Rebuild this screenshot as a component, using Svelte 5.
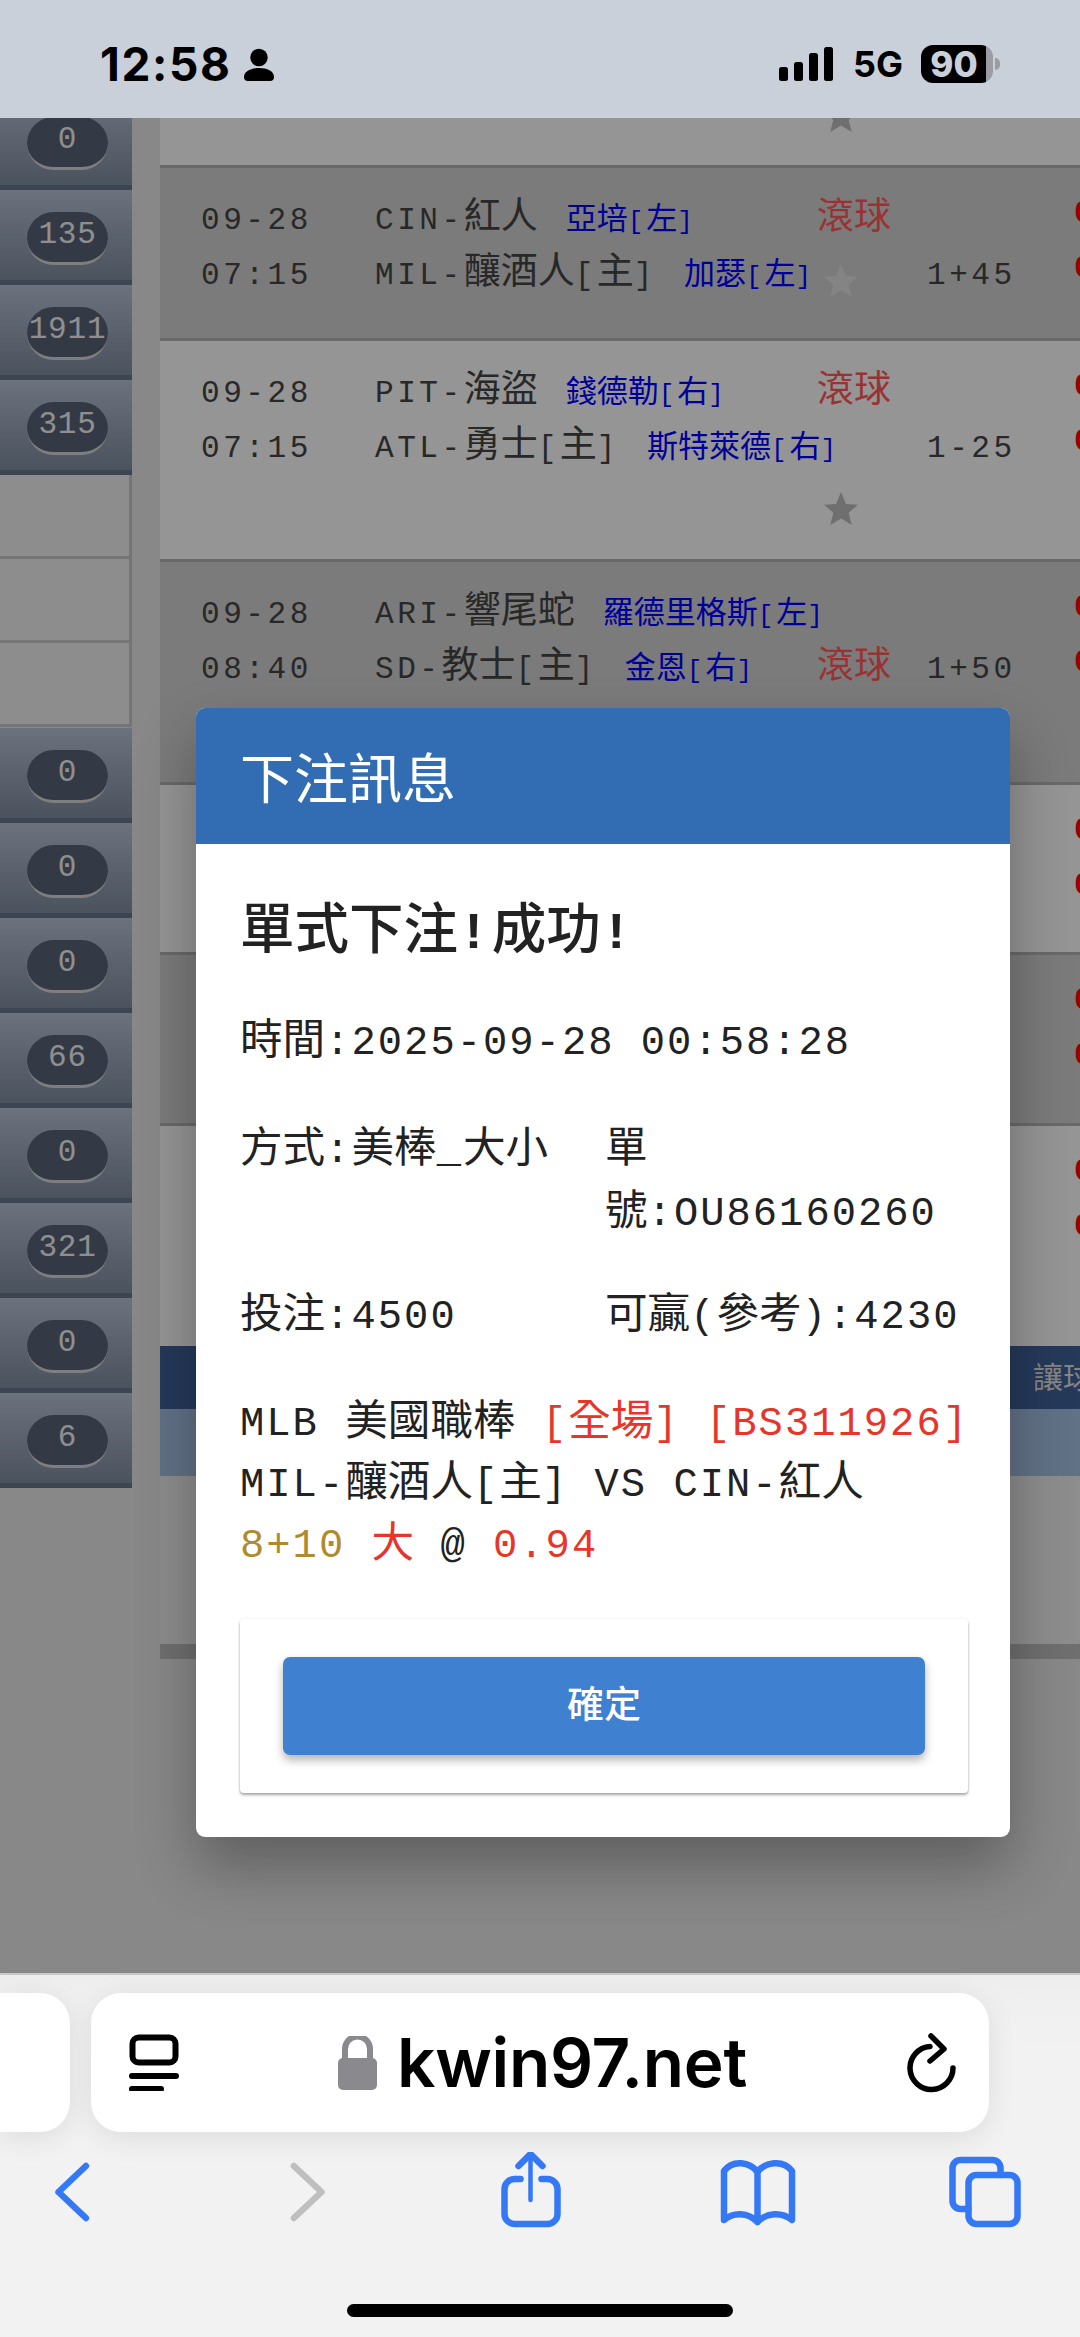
<script>
  const split = (s) => s.match(/[\u2E80-\uFFFF]+|[^\u2E80-\uFFFF]+/g) ?? [];
  const isCjk = (s) => /[\u2E80-\uFFFF]/.test(s);

  const topRows = ['0', '135', '1911', '315'];
  const bottomRows = ['0', '0', '0', '66', '0', '321', '0', '6'];

  const rows = [
    { h: 165, date: '', time: '', a: '', b: '', sa: '', sb: '', starRow: 2 },
    { h: 173, dark: true, date: '09-28', time: '07:15', a: 'CIN-紅人', sa: '亞培[左]', b: 'MIL-釀酒人[主]', sb: '加瑟[左]', live: 1, starRow: 2, odds: '1+45' },
    { h: 221, date: '09-28', time: '07:15', a: 'PIT-海盜', sa: '錢德勒[右]', b: 'ATL-勇士[主]', sb: '斯特萊德[右]', live: 1, starRow: 3, odds: '1-25' },
    { h: 223, dark: true, date: '09-28', time: '08:40', a: 'ARI-響尾蛇', sa: '羅德里格斯[左]', b: 'SD-教士[主]', sb: '金恩[右]', live: 2, starRow: 3, odds: '1+50' },
    { h: 170, date: '09-28', time: '08:40', a: '', b: '', sa: '', sb: '', odds: '' },
    { h: 171, dark: true, date: '09-28', time: '08:40', a: '', b: '', sa: '', sb: '', odds: '' },
    { h: 223, date: '09-28', time: '08:40', a: '', b: '', sa: '', sb: '', odds: '' }
  ];
</script>

{#snippet t(text)}{#each split(text) as part}{#if isCjk(part)}<span class="c">{part}</span>{:else}<span class="l">{part}</span>{/if}{/each}{/snippet}

{#snippet counter(n)}
  <div class="side-row"><div class="pill">{n}</div></div>
{/snippet}

<div class="phone">
  <header class="status">
    <span class="clock">12:58</span>
    <svg class="person" viewBox="241 48 31 33"><circle cx="256" cy="57.5" r="8.7"/><path d="M241 77C241 71 248 68 256 68S271 71 271 77Q271 81 267 81H245Q241 81 241 77Z"/></svg>
    <div class="signal"><i class="b1"></i><i class="b2"></i><i class="b3"></i><i class="b4"></i></div>
    <span class="net">5G</span>
    <div class="battery">90</div>
    <div class="nub"></div>
  </header>

  <main class="page">
    <aside class="side">
      {#each topRows as n}{@render counter(n)}{/each}
      <div class="side-empty"></div>
      <div class="side-empty"></div>
      <div class="side-empty"></div>
      <div class="side-spacer"></div>
      {#each bottomRows as n}{@render counter(n)}{/each}
    </aside>

    <section class="table">
      {#each rows as r}
        <div class="row" class:dark={r.dark} style="height:{r.h}px">
          <div class="cell date r1">{@render t(r.date)}</div>
          <div class="cell date r2">{@render t(r.time)}</div>
          <div class="cell team r1">{@render t(r.a)}<span class="sub">{@render t(r.sa)}</span></div>
          <div class="cell team r2">{@render t(r.b)}<span class="sub">{@render t(r.sb)}</span></div>
          {#if r.live === 1}<div class="cell live r1">滾球</div>{/if}
          {#if r.live === 2}<div class="cell live r2">滾球</div>{/if}
          {#if r.starRow}
            <svg class="star" class:r2={r.starRow === 2} class:r3={r.starRow === 3} viewBox="0 0 34 33"><path d="M17 0l5 12 12 .8-9.300 8 3 12.200L17 26.500 6.300 33l3-12.200-9.300-8L12 12z"/></svg>
          {/if}
          {#if r.odds}<div class="cell odds r2">{@render t(r.odds)}</div>{/if}
          <div class="cell red r1">0.94</div>
          <div class="cell red r2">0.94</div>
        </div>
      {/each}
      <div class="band-head"><span>讓球</span></div>
      <div class="band-sub"></div>
      <div class="band-body"></div>
      <div class="band-foot"></div>
    </section>

    <div class="scrim"></div>

    <div class="modal">
      <div class="modal-head">下注訊息</div>
      <div class="modal-body">
        <h2 class="done">{@render t('單式下注!成功!')}</h2>
        <p class="time">{@render t('時間:2025-09-28 00:58:28')}</p>
        <div class="pair method">
          <p>{@render t('方式:美棒_大小')}</p>
          <p>{@render t('單號:OU86160260')}</p>
        </div>
        <div class="pair bet">
          <p>{@render t('投注:4500')}</p>
          <p>{@render t('可贏(參考):4230')}</p>
        </div>
        <div class="detail">
          <div>{@render t('MLB 美國職棒 ')}<span class="hot">{@render t('[全場] [BS311926]')}</span></div>
          <div>{@render t('MIL-釀酒人[主] VS CIN-紅人')}</div>
          <div><span class="gold">{@render t('8+10 ')}</span><span class="hot">{@render t('大 ')}</span>{@render t('@ ')}<span class="hot">{@render t('0.94')}</span></div>
        </div>
        <div class="card"><button class="ok">確定</button></div>
      </div>
    </div>
  </main>

  <footer class="browser">
    <div class="tabs-row">
      <div class="prev-tab"></div>
      <div class="url">
        <svg class="reader" viewBox="129 2034 50 57"><rect x="132.500" y="2037.500" width="43" height="25" rx="6"/><path d="M132 2076H176M132 2089H161"/></svg>
        <div class="site">
          <svg class="lock" viewBox="340 2035 39 54"><path class="shackle" d="M347 2058V2048a12.500 12.500 0 0 1 25 0V2058"/><rect x="340" y="2057" width="39" height="32" rx="5"/></svg>
          <span class="host">kwin97.net</span>
        </div>
        <svg class="reload" viewBox="905 2030 50 60"><path d="M929 2043.500A21.500 21.500 0 1 0 952 2065M930 2033L943 2046L929 2058"/></svg>
      </div>
    </div>
    <nav class="tools">
      <svg viewBox="31.500 2152 80 80"><path d="M85.400 2166L58 2192L85.400 2218"/></svg>
      <svg class="off" viewBox="267.500 2152 80 80"><path d="M293.400 2166L321 2192L293.400 2218"/></svg>
      <svg viewBox="490.500 2152 80 80"><path d="M518 2166L530 2154L542 2166"/><path class="thin" d="M530 2155V2200"/><path d="M520 2179H514a10 10 0 0 0-10 10V2214a10 10 0 0 0 10 10H547a10 10 0 0 0 10-10V2189a10 10 0 0 0-10-10H541"/></svg>
      <svg viewBox="718 2152 80 80"><path d="M757.500 2172C750 2162 733 2159 724 2171V2220C733 2212 748 2212 757.500 2222C767 2212 782 2212 792 2220V2171C783 2159 765 2162 757.500 2172V2222"/></svg>
      <svg viewBox="944.500 2152 80 80"><rect x="968" y="2175" width="49" height="49" rx="8"/><path d="M968 2209H960a8 8 0 0 1-8-8V2168a8 8 0 0 1 8-8H992a8 8 0 0 1 8 8V2175"/></svg>
    </nav>
    <div class="home"></div>
  </footer>
</div>

<style>
  :global(body) { margin: 0; background: #f2f2f2; }

  .phone {
    width: 1080px;
    height: 2337px;
    display: flex;
    flex-direction: column;
    overflow: hidden;
    font-family: "Noto Sans CJK TC", "Noto Sans", sans-serif;
    color: #222;
  }

  .c { font-family: "Noto Sans CJK TC", sans-serif; }
  .l {
    font-family: "Liberation Mono", monospace;
    font-size: 0.95em;
    letter-spacing: 0.05em;
  }
  .c, .l { white-space: pre-wrap; line-height: 1; }

  /* status bar */
  .status {
    height: 118px;
    flex: none;
    background: #c9d0d9;
    display: flex;
    align-items: center;
    padding: 10px 80px 0 100px;
    box-sizing: border-box;
    font-family: Inter, sans-serif;
    color: #000;
  }
  .clock { font-size: 46px; font-weight: 700; line-height: 1; letter-spacing: 1.600px; }
  .person { width: 31px; height: 33px; margin-left: 12px; }
  .signal { display: flex; align-items: flex-end; gap: 6px; margin-left: auto; height: 34px; }
  .signal i { width: 9px; background: #000; border-radius: 2.500px; display: block; }
  .b1 { height: 14px; }
  .b2 { height: 19px; }
  .b3 { height: 28px; }
  .b4 { height: 34px; }
  .net { font-size: 36px; font-weight: 700; line-height: 1; margin-left: 20px; }
  .battery {
    width: 72px;
    height: 38px;
    margin-left: 18px;
    border-radius: 12px;
    background: linear-gradient(to right, #000 90%, #9b9ca3 90%);
    color: #c9d0d9;
    font-size: 35px;
    font-weight: 800;
    line-height: 38px;
    text-align: center;
    padding-right: 6px;
    box-sizing: border-box;
  }
  .nub { width: 5px; height: 12px; margin-left: 2px; background: #9b9ca3; border-radius: 0 6px 6px 0; }

  /* page */
  .page {
    height: 1855px;
    flex: none;
    position: relative;
    overflow: hidden;
    background: #e3e3e3;
    display: flex;
    align-items: flex-start;
  }
  .side { width: 132px; flex: none; margin-top: -23px; }
  .side-row {
    height: 95px;
    box-sizing: border-box;
    padding: 22px 0 0 27px;
    background: linear-gradient(#b3bed2, #7d8a9e);
    border-bottom: 5px solid #67748a;
  }
  .pill {
    width: 81px;
    height: 53px;
    box-sizing: border-box;
    border-radius: 27px;
    background: #576174;
    border-bottom: 3px solid #d2d2d2;
    color: #eee;
    text-align: center;
    font-family: "Liberation Mono", monospace;
    font-size: 31px;
    letter-spacing: 0.8px;
    line-height: 46px;
  }
  .side-empty {
    height: 84px;
    box-sizing: border-box;
    background: #ececec;
    border-right: 3px solid #c4c4c4;
    border-bottom: 3px solid #c4c4c4;
  }
  .side-spacer { height: 1px; }

  .table { width: 920px; flex: none; margin: -118px 0 0 28px; }
  .row {
    box-sizing: border-box;
    border-top: 3px solid #b0b0b0;
    background: #f8f8f8;
    padding: 18px 0 0 41px;
    display: grid;
    grid-template-columns: 174px 442px 110px 147px 1fr;
    grid-auto-rows: 55px;
    overflow: hidden;
    font-size: 37px;
    align-content: start;
  }
  .row.dark { background: #cdcdcd; }
  .row .l { font-size: 0.84em; letter-spacing: 0.113em; white-space: pre; }
  .row .c { white-space: pre; }
  .cell { line-height: 55px; white-space: nowrap; }
  .r1 { grid-row: 1; }
  .r2 { grid-row: 2; }
  .r3 { grid-row: 3; }
  .date { grid-column: 1; color: #444; }
  .team { grid-column: 2; color: #444; }
  .sub { color: #0000ff; font-size: 31px; margin-left: 28px; }
  .live { grid-column: 3; color: #ff5555; }
  .odds { grid-column: 4; color: #444; }
  .red { grid-column: 5; color: #f00; font-family: "Liberation Mono", monospace; font-size: 31px; font-weight: 700; }
  .star { grid-column: 3; width: 34px; height: 33px; margin: 23px 0 0 7px; fill: #b9b9b9; }
  .dark .star { fill: #dcdcdc; }

  .band-head {
    height: 63px;
    background: #3f5f96;
    font-size: 30px;
    line-height: 58px;
    color: #ddd;
    text-align: right;
    padding-right: 0;
    box-sizing: border-box;
    position: relative;
    overflow: hidden;
  }
  .band-head span { display: inline-block; width: 47px; overflow: hidden; white-space: nowrap; text-align: left; }
  .band-sub { height: 67px; background: #a2bddf; }
  .band-body { height: 168px; background: #ececec; }
  .band-foot { height: 15px; background: #b9b9b9; }

  .scrim { position: absolute; inset: 0; background: rgba(0, 0, 0, 0.4); }

  .modal {
    position: absolute;
    left: 196px;
    top: 590px;
    width: 814px;
    background: #fff;
    border-radius: 9px;
    overflow: hidden;
    box-shadow: 0 30px 60px rgba(0, 0, 0, 0.3);
  }
  .modal-head {
    height: 136px;
    background: #326db3;
    color: #fff;
    font-size: 54px;
    font-weight: 400;
    line-height: 136px;
    padding-left: 44px;
  }
  .modal-body {
    padding: 40px 42px 44px 44px;
    display: flex;
    flex-direction: column;
    font-size: 42.600px;
    line-height: 63px;
    color: #222;
  }
  .done { margin: 0; font-size: 54.500px; line-height: 81px; font-weight: 500; }
  .done .l { font-weight: 700; }
  .modal-body p { margin: 0; }
  .time { margin-top: 39px !important; }
  .method { margin-top: 45px; }
  .bet { margin-top: 40px; }
  .pair { display: grid; grid-template-columns: 365px 361px; }
  .detail { white-space: nowrap; line-height: 61px; margin-top: 45px; }
  .detail .c, .detail .l { white-space: pre; }
  .hot { color: #e8352a; }
  .gold { color: #b08a30; }
  .card {
    height: 174px;
    box-sizing: border-box;
    padding: 38px 43px 0;
    margin-top: 50px;
    border-radius: 4px;
    background: #fff;
    box-shadow: 0 2px 3px rgba(0, 0, 0, 0.35), 0 0 3px rgba(0, 0, 0, 0.06);
  }
  .ok {
    display: block;
    width: 100%;
    height: 98px;
    border: 0;
    border-radius: 7px;
    background: #4080d0;
    color: #fff;
    font: 500 37px/90px "Noto Sans CJK TC", sans-serif;
    padding: 0 0 10px;
    box-shadow: 0 5px 10px rgba(0, 0, 0, 0.3);
  }

  /* browser chrome */
  .browser {
    flex: 1;
    background: linear-gradient(#eeeeee, #f2f2f2 20%);
    border-top: 2px solid #c8c8c8;
    box-sizing: border-box;
    padding-top: 18px;
  }
  .tabs-row { display: flex; gap: 21px; }
  .prev-tab, .url {
    height: 139px;
    background: #fff;
    box-shadow: 0 6px 30px rgba(0, 0, 0, 0.09);
  }
  .prev-tab { width: 70px; border-radius: 0 30px 30px 0; }
  .url {
    width: 898px;
    border-radius: 30px;
    display: flex;
    align-items: center;
    justify-content: space-between;
    padding: 0 33px 0 38px;
    box-sizing: border-box;
  }
  .reader { width: 50px; height: 57px; fill: none; stroke: #000; stroke-width: 6px; stroke-linecap: round; }
  .site { display: flex; align-items: center; gap: 20px; }
  .lock { width: 39px; height: 54px; fill: #8a8a8e; }
  .shackle { fill: none; stroke: #8a8a8e; stroke-width: 6px; }
  .host {
    font-family: Inter, sans-serif;
    font-size: 67.500px;
    font-weight: 600;
    line-height: 60px;
    color: #000;
    letter-spacing: -0.3px;
  }
  .reload { width: 50px; height: 60px; fill: none; stroke: #000; stroke-width: 5.500px; stroke-linecap: round; stroke-linejoin: round; }
  .tools {
    display: grid;
    grid-template-columns: 236px 223px 227.500px 226.500px 80px;
    padding: 20px 0 0 31.500px;
    height: 80px;
  }
  .tools svg { width: 80px; height: 80px; fill: none; stroke: #3478f6; stroke-width: 6.500px; stroke-linecap: round; stroke-linejoin: round; }
  .tools svg.off { stroke: #bfbfbf; }
  .tools .thin { stroke-width: 4.500px; }
  .home {
    width: 386px;
    height: 13px;
    margin: 72px 0 0 347px;
    background: #000;
    border-radius: 7px;
  }
</style>
